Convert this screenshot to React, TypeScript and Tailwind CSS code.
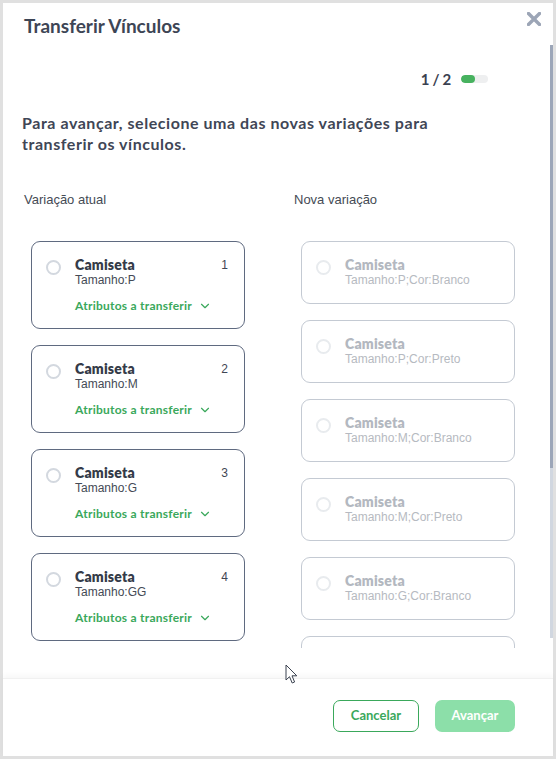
import * as React from "react";
import { ChevronDown } from "lucide-react";

const currentItems = [
  { name: "Camiseta", attr: "Tamanho:P", index: 1 },
  { name: "Camiseta", attr: "Tamanho:M", index: 2 },
  { name: "Camiseta", attr: "Tamanho:G", index: 3 },
  { name: "Camiseta", attr: "Tamanho:GG", index: 4 },
];

const newItems = [
  "Tamanho:P;Cor:Branco",
  "Tamanho:P;Cor:Preto",
  "Tamanho:M;Cor:Branco",
  "Tamanho:M;Cor:Preto",
  "Tamanho:G;Cor:Branco",
  "Tamanho:G;Cor:Preto",
];

const heading = { fontFamily: "Lato, 'Open Sans', sans-serif" };
const body = { fontFamily: "'Liberation Sans', Arial, sans-serif" };

function Radio({ muted }: { muted?: boolean }) {
  return (
    <span
      className={
        muted
          ? "mt-[4px] block h-[15px] w-[15px] shrink-0 rounded-full border-2 border-[#e8ebee]"
          : "mt-[4px] block h-[15px] w-[15px] shrink-0 rounded-full border-2 border-[#d3d8df]"
      }
    />
  );
}

function CurrentCard({ name, attr, index }: { name: string; attr: string; index: number }) {
  return (
    <div className="flex h-[88px] w-[214px] rounded-[9px] border border-[#5f6a80] pl-[14px] pr-[16px] pt-[14px]">
      <Radio />
      <div className="ml-[14px] flex-1">
        <div className="text-[14px] font-extrabold leading-[17px] tracking-[0.2px] text-[#343b48]" style={heading}>
          {name}
        </div>
        <div className="text-[12px] leading-[15px] text-[#444a55]" style={body}>
          {attr}
        </div>
        <div
          className="mt-[10px] flex items-center gap-[6px] text-[12px] font-bold leading-[15px] tracking-[0.25px] text-[#3aa85b]"
          style={heading}
        >
          Atributos a transferir
          <ChevronDown className="h-[14px] w-[14px]" strokeWidth={2} />
        </div>
      </div>
      <div className="pt-[2px] text-[12px] leading-[15px] text-[#3f4654]" style={body}>
        {index}
      </div>
    </div>
  );
}

function NewCard({ attr }: { attr: string }) {
  return (
    <div className="flex h-[63px] w-[214px] shrink-0 rounded-[9px] border border-[#c4cad3] pl-[14px] pt-[14px]">
      <Radio muted />
      <div className="ml-[14px]">
        <div className="text-[14px] font-extrabold leading-[17px] tracking-[0.2px] text-[#b3b8c0]" style={heading}>
          Camiseta
        </div>
        <div className="text-[12px] leading-[15px] text-[#b6bac1]" style={body}>
          {attr}
        </div>
      </div>
    </div>
  );
}

export default function App() {
  return (
    <div className="h-[759px] w-[556px] bg-[#e0e0e0] p-[3px]">
      <div className="relative flex h-full flex-col bg-white">
        <div className="h-[42px] shrink-0 pl-[21px] pt-[11px]">
          <h1 className="text-[19px] font-bold leading-[24px] text-[#3d4555]" style={heading}>
            Transferir Vínculos
          </h1>
        </div>

        <button className="absolute right-[12px] top-[9px] h-[14px] w-[14px]">
          <svg viewBox="0 0 14 14" className="h-[14px] w-[14px]">
            <path d="M1.5 1.5 L12.5 12.5 M12.5 1.5 L1.5 12.5" stroke="#9ca5b6" strokeWidth="3.4" strokeLinecap="square" />
          </svg>
        </button>

        <div className="relative h-[603px] shrink-0 overflow-hidden pl-[19px]">
          <div className="flex items-center justify-end gap-[10px] pr-[65px] pt-[24px]">
            <span className="text-[15px] font-bold leading-[20px] tracking-[-0.3px] text-[#3a4150]" style={heading}>
              1 / 2
            </span>
            <div className="flex h-[8px] w-[27px] overflow-hidden rounded-full bg-[#eeeff0]">
              <div className="h-full w-[14px] rounded-full bg-[#47b25f]" />
            </div>
          </div>

          <p
            className="mt-[23px] w-[480px] text-[16px] font-bold leading-[21px] tracking-[0.55px] text-[#3f4656]"
            style={heading}
          >
            Para avançar, selecione uma das novas variações para transferir os vínculos.
          </p>

          <div className="mt-[38px] flex">
            <div className="w-[272px] shrink-0 pl-[2px]">
              <div className="text-[13px] leading-[16px] text-[#454b55]" style={body}>
                Variação atual
              </div>
              <div className="ml-[7px] mt-[33px] flex flex-col gap-[16px]">
                {currentItems.map((item) => (
                  <CurrentCard key={item.index} {...item} />
                ))}
              </div>
            </div>
            <div className="w-[240px] shrink-0">
              <div className="text-[13px] leading-[16px] text-[#454b55]" style={body}>
                Nova variação
              </div>
              <div className="ml-[7px] mt-[33px] flex flex-col gap-[16px]">
                {newItems.map((attr) => (
                  <NewCard key={attr} attr={attr} />
                ))}
              </div>
            </div>
          </div>

          <div className="absolute right-0 top-0 h-[593px] w-[3px] bg-[#d1d7e0]">
            <div className="h-[423px] w-full bg-[#9ca6b8]" />
          </div>
        </div>

        <div className="h-[30px] shrink-0" />

        <div className="flex flex-1 justify-end gap-[16px] border-t border-[#f1f1f1] pr-[38px] pt-[21px] shadow-[0_-3px_5px_rgba(0,0,0,0.03)]">
          <button
            className="h-[32px] w-[86px] rounded-[7px] border border-[#3aa85b] text-[13px] font-bold text-[#3aa85b]"
            style={heading}
          >
            Cancelar
          </button>
          <button className="h-[32px] w-[80px] rounded-[7px] bg-[#8cdfa9] text-[13px] font-bold text-white" style={heading}>
            Avançar
          </button>
        </div>

        <svg className="absolute left-[282px] top-[661px]" width="13" height="21" viewBox="0 0 13 21">
          <path
            d="M1 1 L1 16 L4.5 12.7 L7.2 19 L9.6 18 L7 11.8 L11.8 11.8 Z"
            fill="white"
            stroke="#3b4250"
            strokeWidth="1"
            strokeLinejoin="round"
          />
        </svg>
      </div>
    </div>
  );
}
